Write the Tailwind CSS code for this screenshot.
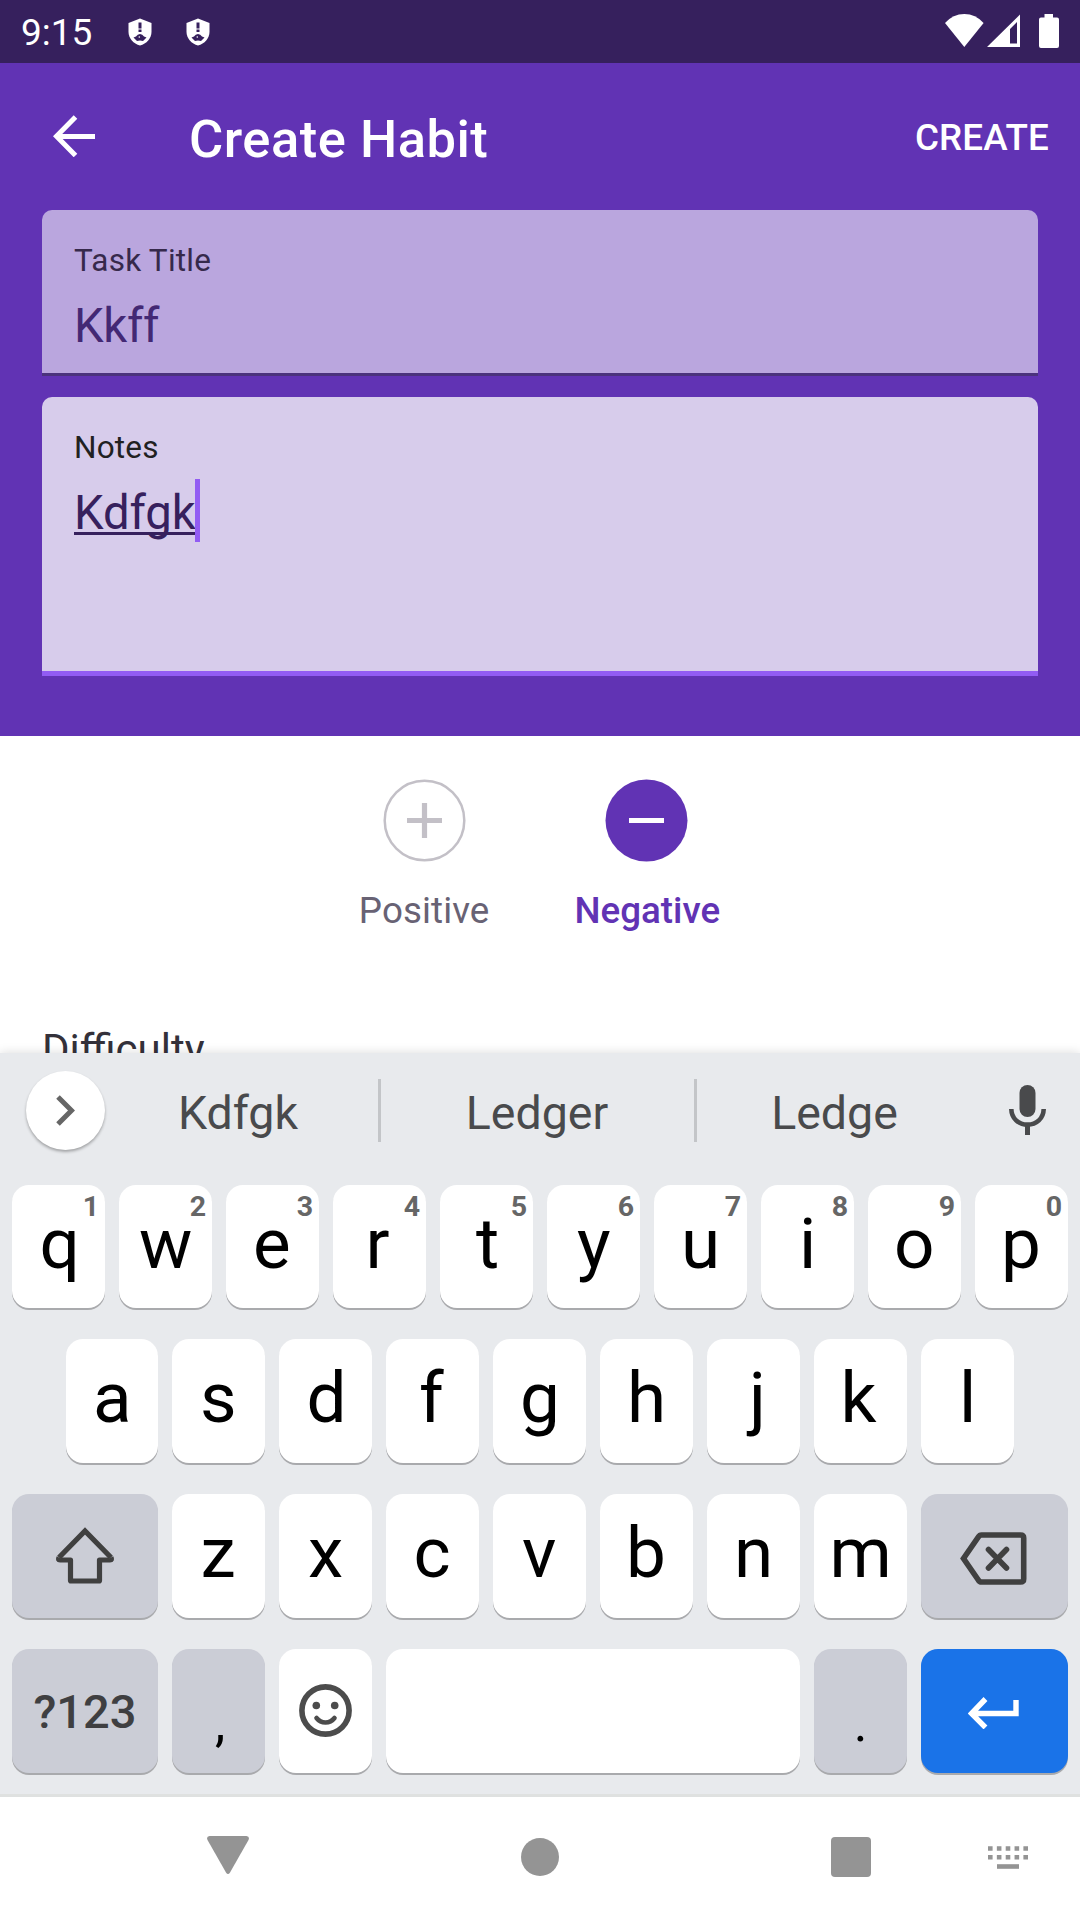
<!DOCTYPE html>
<html lang="en">
<head>
<meta charset="utf-8">
<title>Create Habit</title>
<script src="https://cdn.jsdelivr.net/npm/@tailwindcss/browser@4"></script>
</head>
<body class="bg-white">
<div class="flex h-[1920px] w-[1080px] flex-col overflow-hidden bg-white font-[Roboto,sans-serif]">

  <!-- Status bar -->
  <div class="flex h-[63px] shrink-0 items-start bg-[#36205d] text-white">
    <span class="ml-[21px] w-[107px] text-[37px] leading-[66px]">9:15</span>
    <svg class="mt-[18px] h-[28px] w-[24px]" viewBox="0 0 24 28"><path fill="#fff" d="M12 .5 23.500 5v9c0 6-5 12-11.500 13.500C5.500 26 .5 20 .5 14V5z"/><path fill="#36205d" d="M10.500 4.500h3v6h-3zM10.500 11.500h3v2.500h-3zM5.500 19.500 8 18.500Q9.500 16 12 16t4 2.500l2.500 1-3.500 3.500Q12 22 9 23z"/><circle cx="11.300" cy="19" r=".8" fill="#fff"/></svg>
    <svg class="mt-[18px] ml-[34px] h-[28px] w-[24px]" viewBox="0 0 24 28"><path fill="#fff" d="M12 .5 23.500 5v9c0 6-5 12-11.500 13.500C5.500 26 .5 20 .5 14V5z"/><path fill="#36205d" d="M10.500 4.500h3v6h-3zM10.500 11.500h3v2.500h-3zM5.500 19.500 8 18.500Q9.500 16 12 16t4 2.500l2.500 1-3.500 3.500Q12 22 9 23z"/><circle cx="11.300" cy="19" r=".8" fill="#fff"/></svg>
    <svg class="mt-[14px] mr-[21px] ml-auto h-[34px] w-[114px]" viewBox="0 0 114 34" fill="#fff"><path d="M0 9Q8 0 19.300 0T38.600 9L19.300 33z"/><path fill-rule="evenodd" d="M42 33 75 .5V33zM65 15v14.500h7V8z"/><path d="M99.500 0h8.500v3.500h4q2 0 2 2V32q0 2-2 2H96q-2 0-2-2V5.500q0-2 2-2h3.500z"/></svg>
  </div>

  <!-- Header form -->
  <div class="h-[673px] shrink-0 bg-[#6133b4]">
    <div class="flex h-[147px] items-start text-white">
      <svg class="mt-[52px] ml-[53px] h-[42px] w-[42px]" viewBox="0 0 42 42" fill="none" stroke="#fff" stroke-width="5"><path d="M42 21.500H4M22.500 2 3.500 21.300 22.500 40.500"/></svg>
      <span class="ml-[94px] text-[52.5px] leading-[152px] font-medium tracking-[0.5px]">Create Habit</span>
      <span class="mr-[31px] ml-auto text-[36.75px] leading-[149px] font-medium tracking-[0.15px]">CREATE</span>
    </div>
    <div class="mx-[42px] flex h-[166px] flex-col rounded-t-[10px] border-b-3 border-[#4b337c] bg-[#baa6de] px-[32px] pt-[29px]">
      <span class="text-[31.5px] leading-[43px] tracking-[0.25px] text-[#36294b]">Task Title</span>
      <span class="mt-[14px] text-[47.25px] leading-[61px] tracking-[-0.3px] text-[#432874]">Kkff</span>
    </div>
    <div class="mx-[42px] mt-[21px] flex h-[279px] flex-col items-start rounded-t-[10px] border-b-5 border-[#925cf3] bg-[#d7cceb] px-[32px] pt-[29px]">
      <span class="text-[31.5px] leading-[43px] tracking-[0.2px] text-[#212121]">Notes</span>
      <div class="mt-[10px] flex h-[63px] items-start">
        <span class="h-[56px] border-b-3 border-[#36205d] text-[47.25px] leading-[69px] tracking-[-0.1px] text-[#36205d]">Kdfgk</span>
        <i class="-ml-px h-[63px] w-[5px] bg-[#925cf3]"></i>
      </div>
    </div>
  </div>

  <!-- Habit direction -->
  <div class="flex h-[317px] shrink-0 flex-col overflow-hidden">
    <div class="flex justify-center gap-[85px] pt-[42px] pr-[1px]">
      <div class="flex flex-col items-center">
        <svg class="h-[84px] w-[84px]" viewBox="0 0 84 84" fill="none" stroke="#c3c0c7"><circle cx="42.500" cy="42.500" r="39.800" stroke-width="2.500"/><path stroke-width="5.200" d="M25 42.500h35M42.500 25v35"/></svg>
        <span class="mt-[22px] text-[36.75px] leading-[53px] tracking-[0.1px] text-[#686274]">Positive</span>
      </div>
      <div class="flex flex-col items-center">
        <svg class="h-[84px] w-[84px]" viewBox="0 0 84 84"><circle cx="41.500" cy="42.500" r="41" fill="#6133b4"/><path stroke="#fff" stroke-width="5.200" d="M24 42.500h35"/></svg>
        <span class="mt-[22px] text-[36.75px] leading-[53px] font-medium text-[#6133b4]">Negative</span>
      </div>
    </div>
    <span class="mt-[82px] ml-[42px] text-[42px] leading-[61px] text-[#34313a]">Difficulty</span>
  </div>

  <!-- Keyboard -->
  <div class="relative h-[741px] shrink-0 bg-[#e8eaed] shadow-[0_0_10px_rgba(0,0,0,0.15)]">
    <div class="flex h-[132px] items-start text-[46.5px] leading-[120px] text-[#494a4c]">
      <div class="mt-[18px] ml-[26px] flex h-[79px] w-[79px] items-center justify-center rounded-full bg-white shadow-[0_2px_3px_rgba(0,0,0,0.3)]">
        <svg class="h-[31px] w-[19px]" viewBox="0 0 19 31" fill="none" stroke="#666" stroke-width="5"><path d="M2 2 15.500 15.500 2 29"/></svg>
      </div>
      <span class="ml-[-6px] w-[279px] pr-[1px] text-center">Kdfgk</span>
      <i class="mt-[26px] h-[63px] w-[3px] bg-[#c3c5c8]"></i>
      <span class="w-[313px] pr-[1px] text-center">Ledger</span>
      <i class="mt-[26px] h-[63px] w-[3px] bg-[#c3c5c8]"></i>
      <span class="w-[277px] pr-[2px] text-center">Ledge</span>
      <svg class="mt-[32px] ml-[34px] h-[50px] w-[38px]" viewBox="0 0 38 50" fill="none" stroke="#494a4c"><rect x="11.500" y="0" width="16" height="32" rx="8" fill="#494a4c" stroke="none"/><path stroke-width="4.600" d="M3.300 24C3.500 33.500 10.500 39.600 19.500 39.600S35.500 33.500 35.700 24"/><path stroke-width="5" d="M19.500 39v11"/></svg>
    </div>

    <div id="row1" class="flex h-[154px] gap-[14px] px-[12px]"></div>
    <div id="row2" class="flex h-[155px] justify-end gap-[14px] pr-[66px]"></div>
    <div class="flex h-[155px] gap-[14px] px-[12px]">
      <div class="flex h-[124px] w-[146px] justify-center rounded-[17px] bg-[#cbcdd6] shadow-[0_2px_0_#a9aaad]">
        <svg class="mt-[33px] h-[58px] w-[60px]" viewBox="0 0 60 58" fill="none" stroke="#404040" stroke-width="5.200" stroke-linejoin="round"><path stroke-linejoin="miter" d="M4 30.500 30 4 56 30.500"/><path d="M4 30.500Q2.500 33 5 33H15.500V53.500q0 .5.500.5H44q.5 0 .5-.5V33H55Q57.500 33 56 30.500"/></svg>
      </div>
      <div id="row3" class="flex flex-1 gap-[14px]"></div>
      <div class="flex h-[124px] w-[147px] justify-center rounded-[17px] bg-[#cbcdd6] shadow-[0_2px_0_#a9aaad]">
        <svg class="mt-[38px] mr-[4px] h-[53px] w-[68px]" viewBox="0 0 68 53" fill="none" stroke="#404040" stroke-width="5.600"><path d="M22.500 3H61.500Q64.700 3 64.700 6V47Q64.700 50 61.500 50H22.500Q20.500 50 19.300 48L4.500 26.500 19.300 5Q20.500 3 22.500 3z"/><path stroke-linecap="round" d="M29.500 17.500 47.500 36M47.500 17.500 29.500 36"/></svg>
      </div>
    </div>
    <div class="flex gap-[14px] px-[12px]">
      <span class="h-[124px] w-[146px] rounded-[17px] bg-[#cbcdd6] text-center text-[47px] leading-[126px] font-medium text-[#3f3f41] shadow-[0_2px_0_#a9aaad]">?123</span>
      <span class="h-[124px] w-[93px] rounded-[17px] bg-[#cbcdd6] pl-[3px] text-center text-[52px] leading-[149px] text-black shadow-[0_2px_0_#a9aaad]">,</span>
      <div class="flex h-[124px] w-[93px] justify-center rounded-[17px] bg-white shadow-[0_2px_0_#a9aaad]">
        <svg class="mt-[35px] h-[53px] w-[53px]" viewBox="0 0 53 53" fill="none" stroke="#4c4c4c"><circle cx="26.500" cy="26.500" r="23.600" stroke-width="5.600"/><circle cx="17.300" cy="21.500" r="3.800" fill="#4c4c4c" stroke="none"/><circle cx="35.700" cy="21.500" r="3.800" fill="#4c4c4c" stroke="none"/><path stroke-width="4.600" stroke-linecap="round" d="M17.500 34Q21 38.500 26.500 38.500T35.500 34"/></svg>
      </div>
      <span class="h-[124px] flex-1 rounded-[17px] bg-white shadow-[0_2px_0_#a9aaad]"></span>
      <span class="h-[124px] w-[93px] rounded-[17px] bg-[#cbcdd6] text-center text-[52px] leading-[149px] text-black shadow-[0_2px_0_#a9aaad]">.</span>
      <div class="flex h-[124px] w-[147px] justify-center rounded-[17px] bg-[#1a73e8] shadow-[0_2px_0_#a9aaad]">
        <svg class="mt-[48px] mr-[2px] h-[32px] w-[51px]" viewBox="0 0 51 32" fill="none" stroke="#fff" stroke-width="5.400"><path d="M48 3V16.500H5M17.500 2 3.500 16.500 17.500 30.500"/></svg>
      </div>
    </div>
  </div>

  <!-- Navigation bar -->
  <div class="relative flex h-[126px] shrink-0 items-start border-t-3 border-[#dfe1e0] bg-white">
    <svg class="mt-[39px] ml-[207px] h-[38px] w-[42px]" viewBox="0 0 42 38"><path fill="#949494" d="M2.500 0H39.500Q43 .5 41.500 4L23 36.500Q21 39.500 19 36.500L.5 4Q-1 .5 2.500 0z"/></svg>
    <i class="mt-[41px] ml-[272px] h-[38px] w-[38px] rounded-full bg-[#949494]"></i>
    <i class="mt-[40px] ml-[272px] h-[40px] w-[40px] rounded-[4px] bg-[#949494]"></i>
    <svg class="mt-[49px] ml-[117px] h-[23px] w-[40px]" viewBox="0 0 40 23" fill="none" stroke="#949494" stroke-width="4.600"><path stroke-dasharray="4.600 4.250" d="M0 2.500H40M0 11.300H40"/><path d="M9 20.500H31"/></svg>
  </div>
</div>

<script>
  const keyClass = "relative h-[124px] w-[93px] shrink-0 rounded-[17px] bg-white text-center text-[71px] leading-[118px] text-black shadow-[0_2px_0_#a9aaad]";
  const homeKeyClass = "relative h-[124px] w-[93px] shrink-0 rounded-[17px] bg-white text-center text-[71px] leading-[118px] text-black shadow-[0_2px_0_#a9aaad] first:w-[92px]";
  const topKeyClass = "relative h-[123px] w-[93px] shrink-0 rounded-[17px] bg-white text-center text-[71px] leading-[118px] text-black shadow-[0_2px_0_#a9aaad]";
  const hintClass = "absolute top-[5px] right-[6px] text-[28.500px] leading-[34px] font-bold text-[#666]";
  // Letters are centred on their ink, not on their advance width
  const ctx = document.createElement("canvas").getContext("2d");
  ctx.font = "71px Roboto";
  const shift = c => {
    const m = ctx.measureText(c);
    return (m.width / 2 - (m.actualBoundingBoxRight - m.actualBoundingBoxLeft) / 2).toFixed(2);
  };
  const fill = (id, letters, cls, hints) => {
    document.getElementById(id).innerHTML = [...letters].map((c, i) =>
      `<div class="${cls}"><span class="inline-block" style="transform:translateX(${shift(c)}px)">${c}</span>${hints ? `<span class="${hintClass}">${hints[i]}</span>` : ""}</div>`).join("");
  };
  fill("row1", "qwertyuiop", topKeyClass, "1234567890");
  fill("row2", "asdfghjkl", homeKeyClass);
  fill("row3", "zxcvbnm", keyClass);
</script>
</body>
</html>
